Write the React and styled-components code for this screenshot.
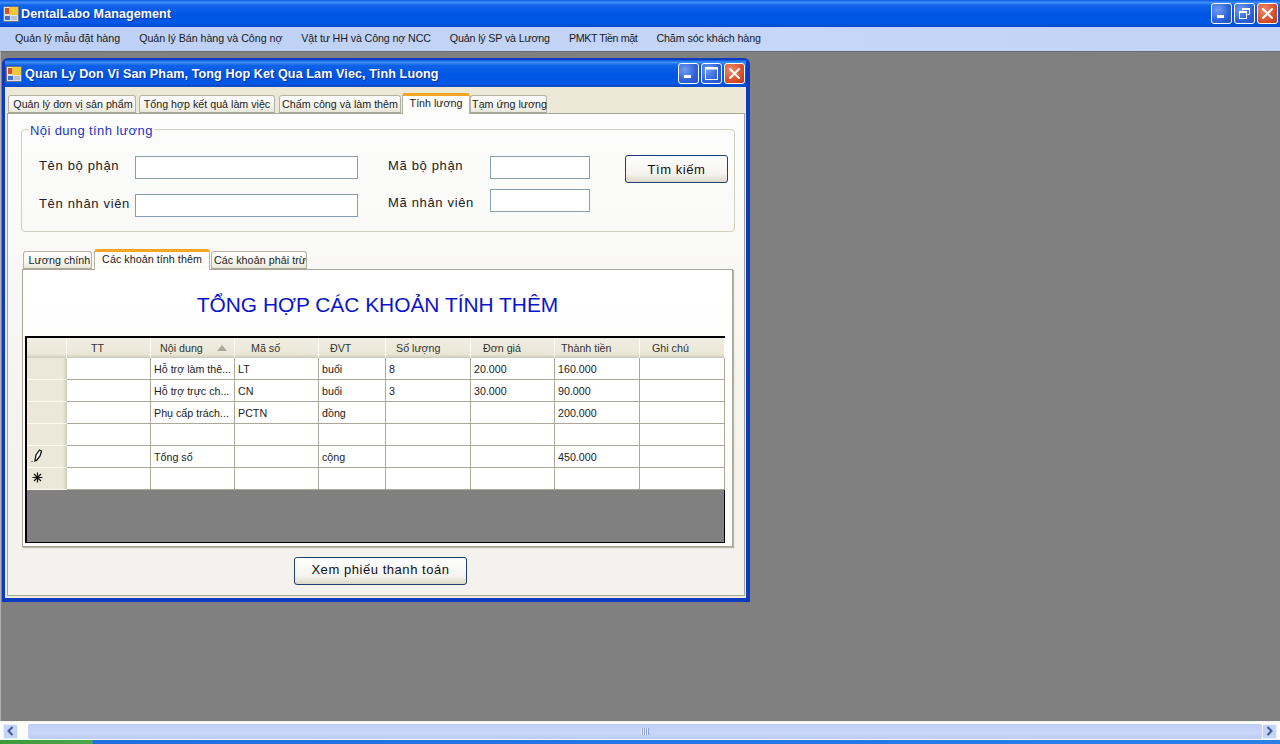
import React from 'react'
import styled, {createGlobalStyle} from 'styled-components'

const Global=createGlobalStyle`
  html,body{margin:0;padding:0;background:#808080;}
  #root{width:1280px;height:744px;overflow:hidden;}
  *{box-sizing:border-box;}
`

const Screen=styled.div`
  width:1280px;
  height:744px;
  display:flex;
  flex-direction:column;
  font-family:"Liberation Sans",Arial,sans-serif;
  font-size:10.7px;
  color:#111;
`

const TitleBar=styled.div`
  height:${p=>p.$h}px;
  flex:none;
  display:flex;
  align-items:center;
  padding:0 ${p=>p.$right}px 0 ${p=>p.$left}px;
  gap:${p=>p.$gap}px;
  background:linear-gradient(#0a5be6 0%,#3d8ef5 9%,#0e62ea 20%,#0056e4 55%,#0058e8 85%,#0a49c4 100%);
`

const TitleText=styled.div`
  flex:1;
  color:#fff;
  font-weight:bold;
  font-size:12.6px;
  letter-spacing:${p=>p.$spacing}px;
  text-shadow:1px 1px 0 #0a2f9c;
  white-space:nowrap;
`

const WinButtons=styled.div`
  display:flex;
  gap:2px;
`

const WinButton=styled.div`
  width:21px;
  height:21px;
  border:1px solid #fff;
  border-radius:3px;
  display:flex;
  align-items:center;
  justify-content:center;
  background:${p=>p.$close
    ?'radial-gradient(circle at 30% 30%,#ee8a6c,#d8512c 60%,#b8361a)'
    :'radial-gradient(circle at 30% 30%,#6f9cf2,#2f62d8 60%,#2450c0)'};
`

const MenuBar=styled.div`
  height:24px;
  flex:none;
  display:flex;
  align-items:center;
  padding:0 0 2px 15px;
  gap:19px;
  background:linear-gradient(90deg,#bccff5,#c6d6f8 60%,#c3d3f6);
  font-size:10.7px;
  color:#1a1a1a;
`

const MenuItem=styled.span`
  letter-spacing:${p=>p.$spacing}px;
`

const Desk=styled.div`
  flex:1;
  min-height:0;
  background:#808080;
  border-top:1px solid #6c6c6c;
  border-left:1px solid #b0b0b0;
  padding:6px 0 0 1px;
`

const Window=styled.div`
  width:748px;
  height:544px;
  display:flex;
  flex-direction:column;
  background:#0c3bbf;
  border-radius:6px 6px 0 0;
  padding:2px 4px 4px 3px;
`

const WindowBody=styled.div`
  flex:1;
  min-height:0;
  display:flex;
  flex-direction:column;
  background:#ece9d8;
  padding:6px 1px 2px 2px;
`

const TabStrip=styled.div`
  display:flex;
  align-items:flex-end;
  height:${p=>p.$h}px;
  flex:none;
  padding-left:${p=>p.$left}px;
  gap:${p=>p.$gap}px;
  letter-spacing:${p=>p.$spacing||0}px;
  position:relative;
  z-index:1;
`

const Tab=styled.div`
  width:${p=>p.$w}px;
  margin-right:${p=>p.$mr||0}px;
  height:${p=>p.$active?21:18}px;
  margin-bottom:${p=>p.$active?-1:0}px;
  padding:0 0 ${p=>p.$active?4:0}px ${p=>p.$pl||0}px;
  display:flex;
  align-items:center;
  justify-content:center;
  white-space:nowrap;
  font-size:10.7px;
  color:#222;
  border:1px solid #b4b4a6;
  border-bottom:${p=>p.$active?'none':'1px solid #a8a89a'};
  border-radius:3px 3px 0 0;
  background:${p=>p.$active?'#fdfdfb':'linear-gradient(#fff,#f4f3ec 70%,#e8e6d9)'};
  border-top:${p=>p.$active?'3px solid #f5a623':'1px solid #b4b4a6'};
`

const TabPage=styled.div`
  flex:1;
  min-height:0;
  border:1px solid #a8a89a;
  background:linear-gradient(#fdfdfd,#f3f2ee 70%);
  padding:15px 9px 0 13px;
  display:flex;
  flex-direction:column;
`

const Group=styled.fieldset`
  margin:0;
  height:103px;
  flex:none;
  border:1px solid #d0d0bf;
  border-radius:4px;
  padding:0 6px 0 17px;
  display:flex;
  align-items:flex-start;
  position:relative;
`

const GroupTitle=styled.legend`
  position:absolute;
  top:-7px;
  left:7px;
  background:#fdfdfd;
  padding:0 1px;
  color:#1b35c4;
  font-size:13px;
  letter-spacing:.38px;
`

const FormColumn=styled.div`
  width:${p=>p.$w}px;
  margin-left:${p=>p.$ml||0}px;
  padding-top:26px;
  display:flex;
  flex-direction:column;
  gap:${p=>p.$gap}px;
`

const FormRow=styled.div`
  display:flex;
  align-items:flex-start;
  justify-content:space-between;
  height:23px;
`

const Label=styled.span`
  font-size:13px;
  line-height:15px;
  margin-top:${p=>p.$mt}px;
  letter-spacing:.66px;
  color:#222;
`

const Input=styled.div`
  width:${p=>p.$w}px;
  height:23px;
  background:#fff;
  border:1px solid #8c9cb2;
`

const Btn=styled.div`
  width:${p=>p.$w}px;
  height:${p=>p.$h}px;
  margin:${p=>p.$m};
  padding-bottom:${p=>p.$pb||0}px;
  flex:none;
  display:flex;
  align-items:center;
  justify-content:center;
  font-size:13px;
  letter-spacing:.55px;
  color:#111;
  border:1px solid #1f3f6f;
  border-radius:3px;
  background:linear-gradient(#fff,#f4f3ee 70%,#dcd8c8);
`

const InnerTabs=styled.div`
  margin:17px 0 0 1px;
  width:711px;
  display:flex;
  flex-direction:column;
`

const Panel=styled.div`
  height:278px;
  background:linear-gradient(#fff,#fbfbf9);
  border:1px solid #a8a89a;
  box-shadow:1px 1px 1px #b5b5a8;
  padding:0 8px 0 2px;
  display:flex;
  flex-direction:column;
`

const Heading=styled.div`
  height:66px;
  display:flex;
  align-items:center;
  justify-content:center;
  padding:3px 0 0 6px;
  font-size:20.9px;
  color:#0a14c8;
`

const Grid=styled.div`
  height:207px;
  width:700px;
  display:flex;
  flex-direction:column;
  background:#808080;
  border:solid #000;
  border-width:2px 1px 1px 2px;
`

const Row=styled.div`
  display:grid;
  grid-template-columns:40px 84px 84px 84px 67px 85px 84px 85px 85px;
  flex:none;
`

const HeadCell=styled.div`
  height:20px;
  display:flex;
  align-items:center;
  padding-left:${p=>p.$pad}px;
  background:linear-gradient(#f0eee2,#ebe8d8 80%,#cdcabb);
  border-right:1px solid #fbfaf2;
  font-size:10.7px;
  color:#333;
  white-space:nowrap;
`

const Gutter=styled.div`
  height:22px;
  background:linear-gradient(90deg,#ebe8d9,#ebe8d9 90%,#cfccbc);
  border-bottom:1px solid #fbfaf2;
  display:flex;
  align-items:center;
  justify-content:center;
  padding:0 20px 2px 0;
`

const Cell=styled.div`
  height:22px;
  display:flex;
  align-items:center;
  padding-left:3px;
  background:#fff;
  border-right:1px solid #aca899;
  border-bottom:1px solid #aca899;
  font-size:10.7px;
  color:#1c1c1c;
  white-space:nowrap;
  overflow:hidden;
`

const ScrollBar=styled.div`
  height:19px;
  flex:none;
  display:flex;
  align-items:center;
  padding:0 3px;
  background:#fdfdf8;
  border-top:1px solid #f4f4f0;
`

const ScrollArrow=styled.div`
  width:15px;
  height:15px;
  flex:none;
  border-radius:2px;
  background:#c5d4f6;
  border:1px solid #e9effc;
  display:flex;
  align-items:center;
  justify-content:center;
`

const ScrollThumb=styled.div`
  flex:1;
  height:15px;
  margin:0 0 0 10px;
  border-radius:2px;
  background:linear-gradient(#c0cff6,#cad7fa 60%,#bccbf2);
  display:flex;
  align-items:center;
  justify-content:center;
`

const Grip=styled.div`
  width:8px;
  height:7px;
  background:repeating-linear-gradient(90deg,#eef2fd 0,#eef2fd 1px,#8ea3d8 1px,#8ea3d8 2px);
`

const Taskbar=styled.div`
  height:4px;
  flex:none;
  background:linear-gradient(90deg,#3c9a3c 0,#4aa84a 92px,#1f6fe0 93px,#2a80e8 100%);
`

const AppIcon=()=>
<svg width="16" height="16" viewBox="0 0 16 16">
  <rect x=".5" y=".5" width="15" height="15" fill="#dfe4ee" stroke="#6c7486"/>
  <rect x="2" y="2" width="4" height="6" fill="#d8502a"/>
  <rect x="6" y="1" width="9" height="8" fill="#f4c63a"/>
  <rect x="2" y="10" width="5" height="4" fill="#3f6fd0"/>
  <rect x="8" y="10" width="6" height="4" fill="#b9bfcc"/>
</svg>

const MinGlyph=()=>
<svg width="13" height="13" viewBox="0 0 13 13"><rect x="2" y="8" width="7" height="3" fill="#fff"/></svg>

const RestoreGlyph=()=>
<svg width="13" height="13" viewBox="0 0 13 13" fill="none" stroke="#fff">
  <path d="M4.5 3.5V1.5H11.5V7.5H9.5" strokeWidth="1"/>
  <rect x="1.5" y="4.5" width="7" height="7" strokeWidth="1"/>
  <path d="M1.5 5H8.5M4.5 2H11.5" strokeWidth="2"/>
</svg>

const MaxGlyph=()=>
<svg width="15" height="15" viewBox="0 0 15 15" fill="none" stroke="#fff">
  <rect x="1.5" y="1.5" width="12" height="12"/>
  <path d="M1.5 2.5H13.5" strokeWidth="2"/>
</svg>

const CloseGlyph=()=>
<svg width="13" height="13" viewBox="0 0 13 13" stroke="#fff" strokeWidth="2" strokeLinecap="round">
  <path d="M2 2L11 11M11 2L2 11"/>
</svg>

const Pencil=()=>
<svg width="12" height="14" viewBox="0 0 12 14" fill="none" stroke="#111" strokeWidth="1.3">
  <path d="M4 11.5L5 6L8.5 1L10.5 2L9 7L5.5 11.5Z" fill="#fff"/>
  <path d="M0.5 12.5H1.5M3 12.5H3.5" strokeWidth="1"/>
</svg>

const Star=()=>
<svg width="11" height="11" viewBox="0 0 11 11" stroke="#111" strokeWidth="1.2">
  <path d="M5.5 .5V10.5M.5 5.5H10.5M2 2L9 9M9 2L2 9"/>
</svg>

const SortIcon=styled.svg`
  margin-left:14px;
`

const SortArrow=()=>
<SortIcon width="10" height="6" viewBox="0 0 10 6">
  <path d="M5 0L10 6H0Z" fill="#aca899"/>
</SortIcon>

const Chevron=({d})=>
<svg width="9" height="10" viewBox="0 0 9 10" fill="none" stroke="#3b5a9c" strokeWidth="2">
  <path d={d}/>
</svg>

const menus=[
  {t:'Quản lý mẫu đặt hàng',s:0},
  {t:'Quản lý Bán hàng và Công nợ',s:-.04},
  {t:'Vật tư HH và Công nợ NCC',s:-.12},
  {t:'Quản lý SP và Lương',s:-.16},
  {t:'PMKT Tiền mặt',s:-.38},
  {t:'Chăm sóc khách hàng',s:-.1}
]

const heads=[
  {t:'TT',pad:24},
  {t:'Nội dung',pad:9,sort:true},
  {t:'Mã số',pad:16},
  {t:'ĐVT',pad:11},
  {t:'Số lượng',pad:10},
  {t:'Đơn giá',pad:12},
  {t:'Thành tiền',pad:6},
  {t:'Ghi chú',pad:12}
]

const rows=[
  {c:['','Hỗ trợ làm thê...','LT','buổi','8','20.000','160.000','']},
  {c:['','Hỗ trợ trực ch...','CN','buổi','3','30.000','90.000','']},
  {c:['','Phụ cấp trách...','PCTN','đồng','','','200.000','']},
  {c:['','','','','','','','']},
  {c:['','Tổng số','','cộng','','','450.000',''],mark:<Pencil/>},
  {c:['','','','','','','',''],mark:<Star/>}
]

export default function App(){
  return (
    <Screen>
      <Global/>
      <TitleBar $h={27} $left={3} $right={2} $gap={2}>
        <AppIcon/>
        <TitleText $spacing={.05}>DentalLabo Management</TitleText>
        <WinButtons>
          <WinButton><MinGlyph/></WinButton>
          <WinButton><RestoreGlyph/></WinButton>
          <WinButton $close><CloseGlyph/></WinButton>
        </WinButtons>
      </TitleBar>
      <MenuBar>
        {menus.map(m=><MenuItem key={m.t} $spacing={m.s}>{m.t}</MenuItem>)}
      </MenuBar>
      <Desk>
        <Window>
          <TitleBar $h={27} $left={1} $right={1} $gap={3}>
            <AppIcon/>
            <TitleText $spacing={.09}>Quan Ly Don Vi San Pham, Tong Hop Ket Qua Lam Viec, Tinh Luong</TitleText>
            <WinButtons>
              <WinButton><MinGlyph/></WinButton>
              <WinButton><MaxGlyph/></WinButton>
              <WinButton $close><CloseGlyph/></WinButton>
            </WinButtons>
          </TitleBar>
          <WindowBody>
            <TabStrip $h={20} $left={1} $gap={3}>
              <Tab $w={128} $pl={2}>Quản lý đơn vị sản phẩm</Tab>
              <Tab $w={136} $mr={1}>Tổng hợp kết quả làm việc</Tab>
              <Tab $w={122} $mr={-2}>Chấm công và làm thêm</Tab>
              <Tab $w={68} $active $mr={-3}>Tính lương</Tab>
              <Tab $w={77} $pl={2}>Tạm ứng lương</Tab>
            </TabStrip>
            <TabPage>
              <Group>
                <GroupTitle>Nội dung tính lương</GroupTitle>
                <FormColumn $w={319} $gap={15}>
                  <FormRow><Label $mt={2}>Tên bộ phận</Label><Input $w={223}/></FormRow>
                  <FormRow><Label $mt={2}>Tên nhân viên</Label><Input $w={223}/></FormRow>
                </FormColumn>
                <FormColumn $w={202} $ml={30} $gap={10}>
                  <FormRow><Label $mt={2}>Mã bộ phận</Label><Input $w={100}/></FormRow>
                  <FormRow><Label $mt={6}>Mã nhân viên</Label><Input $w={100}/></FormRow>
                </FormColumn>
                <Btn $w={103} $h={28} $m="25px 0 0 35px">Tìm kiếm</Btn>
              </Group>
              <InnerTabs>
                <TabStrip $h={20} $left={1} $gap={2} $spacing={.06}>
                  <Tab $w={69} $pl={4}>Lương chính</Tab>
                  <Tab $w={116} $active $mr={-1}>Các khoản tính thêm</Tab>
                  <Tab $w={96} $pl={2}>Các khoản phải trừ</Tab>
                </TabStrip>
                <Panel>
                  <Heading>TỔNG HỢP CÁC KHOẢN TÍNH THÊM</Heading>
                  <Grid>
                    <Row>
                      <HeadCell $pad={0}/>
                      {heads.map(h=><HeadCell key={h.t} $pad={h.pad}>{h.t}{h.sort&&<SortArrow/>}</HeadCell>)}
                    </Row>
                    {rows.map((r,i)=>
                      <Row key={i}>
                        <Gutter>{r.mark}</Gutter>
                        {r.c.map((c,j)=><Cell key={j}>{c}</Cell>)}
                      </Row>
                    )}
                  </Grid>
                </Panel>
              </InnerTabs>
              <Btn $w={173} $h={28} $m="10px 0 0 273px" $pb={3}>Xem phiếu thanh toán</Btn>
            </TabPage>
          </WindowBody>
        </Window>
      </Desk>
      <ScrollBar>
        <ScrollArrow><Chevron d="M6.5 1L2.5 5L6.5 9"/></ScrollArrow>
        <ScrollThumb><Grip/></ScrollThumb>
        <ScrollArrow><Chevron d="M2.5 1L6.5 5L2.5 9"/></ScrollArrow>
      </ScrollBar>
      <Taskbar/>
    </Screen>
  )
}
